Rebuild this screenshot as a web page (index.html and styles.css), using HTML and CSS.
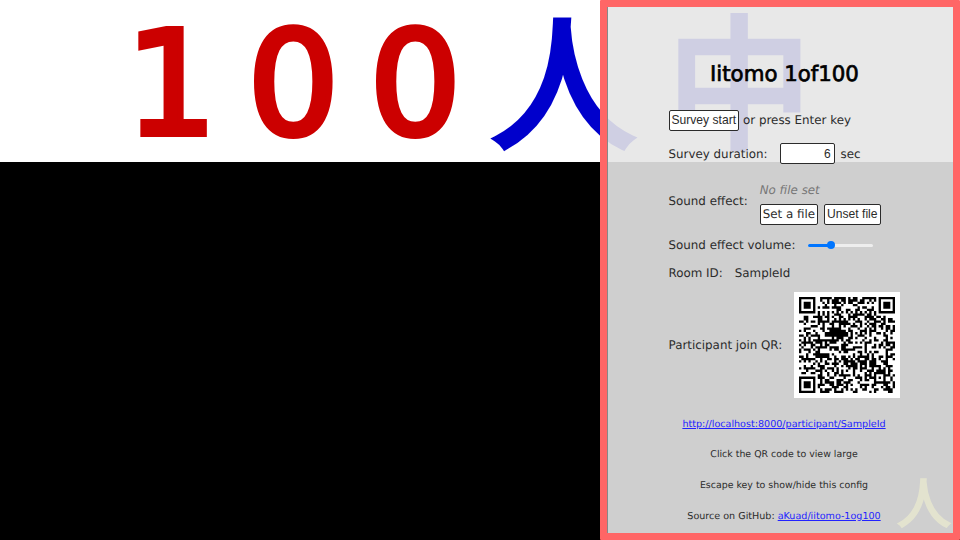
FILE: index.html
```html
<!DOCTYPE html>
<html lang="en">
<head>
<meta charset="utf-8">
<title>Iitomo 1of100</title>
<link rel="stylesheet" href="styles.css">
</head>
<body>
<main class="board">
  <header class="board-head"><span class="num">100</span><span class="kanji hito">人</span><span class="kanji naka">中</span></header>
  <div class="board-result"><span class="unit">人</span></div>
</main>
<aside class="config">
  <div class="config-body">
    <h1>Iitomo 1of100</h1>
    <div class="rows">
      <div class="row start"><button class="btn arial">Survey start</button><span>or press Enter key</span></div>
      <div class="row duration"><span class="label">Survey duration:</span><input class="seconds" type="text" value="6"><span>sec</span></div>
      <div class="row sound"><span class="label">Sound effect:</span>
        <div class="file">
          <em>No file set</em>
          <div class="file-btns"><label class="btn">Set a file</label><button class="btn arial">Unset file</button></div>
        </div>
      </div>
      <div class="row volume"><span class="label">Sound effect volume:</span><div class="slider"><div class="slider-fill"></div><div class="slider-thumb"></div></div></div>
      <div class="row room"><span class="label">Room ID:</span><span>SampleId</span></div>
      <div class="row join"><span class="label">Participant join QR:</span><div class="qr"><svg id="qr" viewBox="0 0 41 41"><path fill="#000"/></svg></div></div>
    </div>
    <p><a href="#">http://localhost:8000/participant/SampleId</a></p>
    <p class="hint">Click the QR code to view large</p>
    <p class="hint">Escape key to show/hide this config</p>
    <p>Source on GitHub: <a href="#">aKuad/iitomo-1og100</a></p>
  </div>
</aside>
<script src="qr.js"></script>
</body>
</html>
```
FILE: qr.js
```js
// QR code, version 6, error correction level H, byte mode.
(function () {
  var N = 41, EC = 28, BLOCK = 15;
  var text = "http://localhost:8000/participant/SampleId";
  var EXP = [], LOG = [], i, x = 1;
  for (i = 0; i < 255; i++) { EXP[i] = x; LOG[x] = i; x <<= 1; if (x & 256) x ^= 0x11d; }
  function mul(a, b) { return a && b ? EXP[(LOG[a] + LOG[b]) % 255] : 0; }

  function codewords() {
    var bits = [], out = [];
    function put(v, n) { while (n--) bits.push((v >> n) & 1); }
    put(4, 4); put(text.length, 8);
    for (var k = 0; k < text.length; k++) put(text.charCodeAt(k), 8);
    put(0, 4);
    for (k = 0; k < bits.length; k += 8) out.push(parseInt(bits.slice(k, k + 8).join(""), 2));
    for (k = 0; out.length < BLOCK * 4; k++) out.push(k % 2 ? 0x11 : 0xec);
    return out;
  }

  function parity(data) {
    var gen = [1], k, j;
    for (k = 0; k < EC; k++) {
      var next = gen.concat(0);
      for (j = 0; j < gen.length; j++) next[j + 1] ^= mul(gen[j], EXP[k]);
      gen = next;
    }
    var rem = data.concat(new Array(EC).fill(0));
    for (k = 0; k < data.length; k++) {
      var f = rem[k];
      for (j = 0; j < gen.length; j++) rem[k + j] ^= mul(gen[j], f);
    }
    return rem.slice(data.length);
  }

  function stream() {
    var all = codewords(), data = [], ec = [], out = [], k, b;
    for (b = 0; b < 4; b++) { data[b] = all.slice(b * BLOCK, (b + 1) * BLOCK); ec[b] = parity(data[b]); }
    for (k = 0; k < BLOCK; k++) for (b = 0; b < 4; b++) out.push(data[b][k]);
    for (k = 0; k < EC; k++) for (b = 0; b < 4; b++) out.push(ec[b][k]);
    return out;
  }

  var MASKS = [
    function (r, c) { return (r + c) % 2 === 0; },
    function (r) { return r % 2 === 0; },
    function (r, c) { return c % 3 === 0; },
    function (r, c) { return (r + c) % 3 === 0; },
    function (r, c) { return (Math.floor(r / 2) + Math.floor(c / 3)) % 2 === 0; },
    function (r, c) { return (r * c) % 2 + (r * c) % 3 === 0; },
    function (r, c) { return ((r * c) % 2 + (r * c) % 3) % 2 === 0; },
    function (r, c) { return ((r * c) % 3 + (r + c) % 2) % 2 === 0; }
  ];
  var words = stream();

  function build(mask, test) {
    var m = [], r, c, k;
    for (r = 0; r < N; r++) m.push(new Array(N).fill(null));
    [[0, 0], [N - 7, 0], [0, N - 7]].forEach(function (p) {
      for (var a = -1; a < 8; a++) for (var b = -1; b < 8; b++) {
        var y = p[0] + a, z = p[1] + b;
        if (y < 0 || z < 0 || y >= N || z >= N) continue;
        var d = Math.max(Math.abs(a - 3), Math.abs(b - 3));
        m[y][z] = d !== 2 && d !== 4;
      }
    });
    for (r = -2; r < 3; r++) for (c = -2; c < 3; c++) m[34 + r][34 + c] = Math.max(Math.abs(r), Math.abs(c)) !== 1;
    for (k = 8; k < N - 8; k++) m[k][6] = m[6][k] = k % 2 === 0;
    var fmt = (2 << 3) | mask, bch = fmt << 10;
    for (k = 14; k >= 10; k--) if ((bch >> k) & 1) bch ^= 0x537 << (k - 10);
    fmt = ((fmt << 10) | bch) ^ 0x5412;
    for (k = 0; k < 15; k++) {
      var on = !test && ((fmt >> k) & 1) === 1;
      if (k < 6) m[k][8] = on; else if (k < 8) m[k + 1][8] = on; else m[N - 15 + k][8] = on;
      if (k < 8) m[8][N - k - 1] = on; else if (k < 9) m[8][15 - k] = on; else m[8][14 - k] = on;
    }
    m[N - 8][8] = !test;
    var bit = 0, row = N - 1, inc = -1;
    for (var col = N - 1; col > 0; col -= 2) {
      if (col === 6) col--;
      for (; row >= 0 && row < N; row += inc) for (c = 0; c < 2; c++) if (m[row][col - c] === null) {
        var v = bit < words.length * 8 && ((words[bit >> 3] >> (7 - bit % 8)) & 1) === 1;
        m[row][col - c] = v !== MASKS[mask](row, col - c);
        bit++;
      }
      row -= inc; inc = -inc;
    }
    return m;
  }

  function penalty(m) {
    var lost = 0, dark = 0, r, c;
    for (r = 0; r < N; r++) for (c = 0; c < N; c++) {
      var same = 0;
      for (var a = -1; a < 2; a++) for (var b = -1; b < 2; b++)
        if ((a || b) && m[r + a] && m[r + a][c + b] === m[r][c]) same++;
      if (same > 5) lost += same - 2;
      if (m[r][c]) dark++;
      if (r < N - 1 && c < N - 1) {
        var s = m[r][c] + m[r + 1][c] + m[r][c + 1] + m[r + 1][c + 1];
        if (s === 0 || s === 4) lost += 3;
      }
      var h = "", w = "";
      for (a = 0; a < 7; a++) { h += c + 6 < N ? +m[r][c + a] : ""; w += r + 6 < N ? +m[r + a][c] : ""; }
      if (h === "1011101") lost += 40;
      if (w === "1011101") lost += 40;
    }
    return lost + Math.abs(100 * dark / N / N - 50) / 5 * 10;
  }

  var best = 0, low = Infinity;
  for (i = 0; i < 8; i++) { var p = penalty(build(i, true)); if (p < low) { low = p; best = i; } }
  var d = "";
  build(best, false).forEach(function (line, r) {
    for (var c = 0; c < N; c++) if (line[c]) {
      var s = c; while (c < N && line[c]) c++;
      d += "M" + s + " " + r + "h" + (c - s) + "v1h-" + (c - s) + "z";
    }
  });
  document.querySelector("#qr path").setAttribute("d", d);
})();
```
FILE: styles.css
```css
* { box-sizing: border-box; }
body { margin: 0; width: 960px; height: 540px; overflow: hidden; background: #fff; font-family: "DejaVu Sans", sans-serif; text-rendering: geometricPrecision; }
.board { height: 540px; display: flex; flex-direction: column; }
.board-head { height: 162px; display: flex; align-items: flex-start; padding-left: 125.5px; font-size: 144px; line-height: 168px; white-space: nowrap; -webkit-text-stroke-width: 6px; }
.num { color: #c00; letter-spacing: 30.4px; }
.kanji { color: #00c; font-family: "Noto Sans CJK JP", sans-serif; width: 176px; margin-top: -9px; }
.board-result { flex: 1; background: #000; display: flex; align-items: flex-end; justify-content: flex-end; padding: 0 9px 10px 0; }
.unit { color: #cc0; font: 54px/60px "Noto Sans CJK JP", sans-serif; -webkit-text-stroke-width: 2px; }
.config { position: absolute; left: 600px; top: 0; width: 360px; height: 540px; border: 7px solid #f66; border-radius: 1px; color: #2b2b2b; font-size: 11.88px; }
.config-body { height: 526px; border-left: 1px solid #888; background: rgba(230, 230, 230, .9); padding-top: 54px; }
h1 { margin: 0 0 20px; padding-left: 8px; text-align: center; color: #000; font-size: 21.3px; font-weight: normal; line-height: 28px; -webkit-text-stroke: .7px #000; }
.rows { padding-left: 60.5px; }
.row { display: flex; align-items: center; }
.start { height: 22px; gap: 4px; }
.duration { height: 22px; margin-top: 11.5px; }
.label { margin-right: 12px; }
.btn { height: 21px; border: 1px solid #2b2b2b; border-radius: 2px; background: #fff; color: #2b2b2b; padding: 0 2px; font: 11.88px/19px "DejaVu Sans", sans-serif; }
.arial { font: 12.1px/19px "Liberation Sans", sans-serif; }
.seconds { width: 55px; height: 21px; margin-right: 6px; padding: 0 3px; border: 1px solid #2b2b2b; border-radius: 2px; text-align: right; color: #2b2b2b; font: 12px "Liberation Sans", sans-serif; }
.sound { margin-top: 15.5px; height: 43px; }
.sound .label { margin-top: -1px; }
.file { margin-top: 4px; }
.file em { display: block; color: #777; line-height: 16px; height: 22px; }
.file-btns { display: flex; gap: 6px; }
.volume { margin-top: 14px; height: 16px; }
.slider { position: relative; width: 65px; height: 3px; margin-left: 1px; border-radius: 2px; background: #eee; }
.slider-fill { width: 23px; height: 3px; border-radius: 2px; background: #0075ff; }
.slider-thumb { position: absolute; left: 19px; top: -2.5px; width: 8px; height: 8px; border-radius: 50%; background: #0075ff; }
.room { margin-top: 12px; height: 16px; }
.join { margin-top: 11px; height: 106px; }
.qr { width: 106px; height: 106px; padding: 5px; background: #fff; }
.qr svg { display: block; width: 96px; height: 96px; }
p { margin: 0 0 14.7px; padding-left: 7px; height: 16px; text-align: center; font-size: 9.58px; line-height: 16px; }
.rows + p { margin-top: 18.6px; }
.hint { font-size: 9.42px; }
a { color: #22f; }
```
